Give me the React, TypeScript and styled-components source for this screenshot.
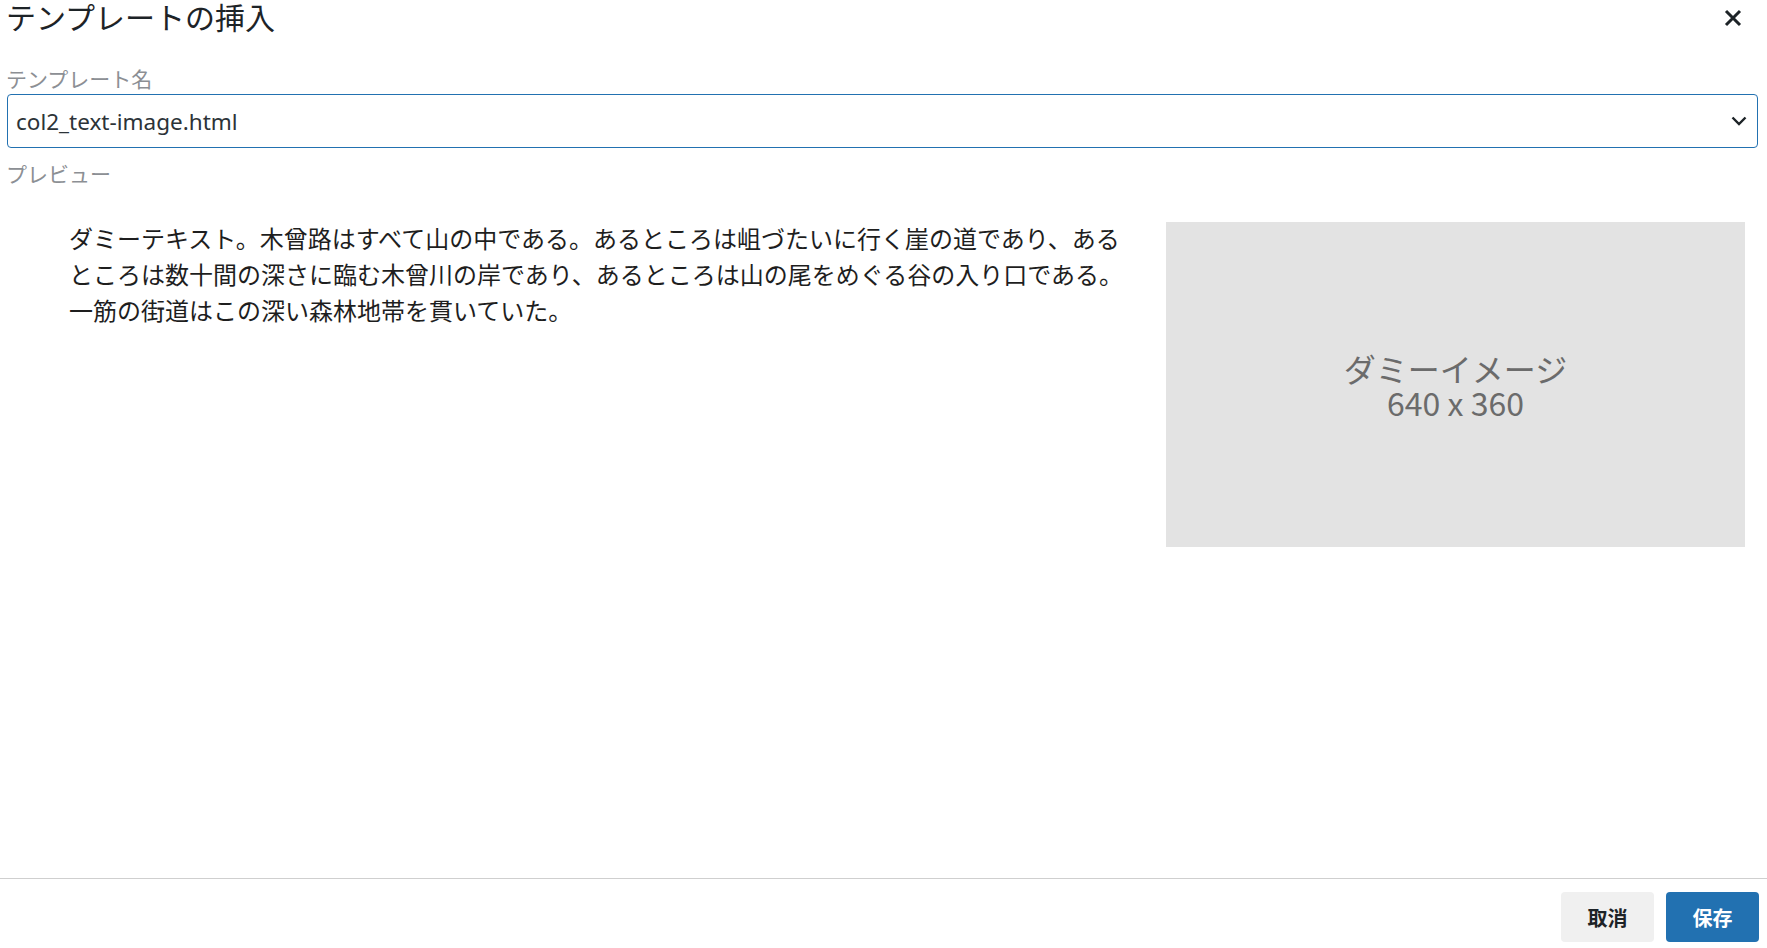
import React from "react";
import styled, { createGlobalStyle } from "styled-components";

const GlobalStyle = createGlobalStyle`
  html, body {
    margin: 0;
    padding: 0;
    height: 100%;
    background: #ffffff;
  }
  body {
    font-family: "Noto Sans", "Noto Sans CJK JP", sans-serif;
    color: #1d2327;
  }
  #root {
    height: 100%;
  }
  * {
    box-sizing: border-box;
  }
`;

const Modal = styled.div`
  display: flex;
  flex-direction: column;
  height: 100vh;
  overflow: hidden;
`;

const Body = styled.div`
  flex: 1;
  display: flex;
  flex-direction: column;
  padding: 0 9px 0 7px;
`;

const Header = styled.div`
  display: flex;
  align-items: flex-start;
  justify-content: space-between;
  height: 62px;
`;

const Title = styled.h1`
  margin: 0 0 0 -1px;
  font-family: "Noto Sans CJK JP", sans-serif;
  font-weight: 400;
  font-size: 30px;
  line-height: 32px;
  color: #1d2327;
`;

const CloseButton = styled.button`
  border: none;
  background: transparent;
  padding: 0;
  margin: 8px 15px 0 0;
  width: 20px;
  height: 20px;
  display: flex;
  align-items: center;
  justify-content: center;
  cursor: pointer;
  color: #1d2327;
`;

const FieldLabel = styled.div`
  margin-left: -1px;
  font-family: "Noto Sans CJK JP", sans-serif;
  font-size: 21px;
  line-height: 32px;
  color: #8c8f94;
`;

const SelectBox = styled.div`
  display: flex;
  align-items: center;
  justify-content: space-between;
  height: 54px;
  border: 1px solid #2271b1;
  border-radius: 4px;
  padding: 0 10px 0 8px;
  background: #fff;
`;

const SelectValue = styled.span`
  font-family: "Noto Sans", "Noto Sans CJK JP", sans-serif;
  font-size: 22.5px;
  color: #2c3338;
`;

const PreviewLabel = styled(FieldLabel)`
  margin-top: 9px;
`;

const PreviewRow = styled.div`
  display: flex;
  align-items: flex-start;
  gap: 27px;
  padding: 0 13px 0 62px;
  margin-top: 33px;
`;

const PreviewText = styled.p`
  flex: 1;
  margin: -2px 0 0 0;
  font-family: "Noto Sans CJK JP", sans-serif;
  font-size: 24px;
  line-height: 36px;
  color: #1e1e1e;
`;

const DummyImage = styled.div`
  flex: 0 0 579px;
  height: 325px;
  background: #e3e3e3;
  display: flex;
  flex-direction: column;
  align-items: center;
  justify-content: center;
  font-family: "Noto Sans CJK JP", sans-serif;
  font-size: 32px;
  line-height: 34px;
  color: #6b6b6b;
  text-align: center;
`;

const Footer = styled.div`
  display: flex;
  justify-content: flex-end;
  gap: 12px;
  border-top: 1px solid #cfcfcf;
  padding: 13px 8px 6px 0;
`;

const Button = styled.button<{ $primary?: boolean }>`
  width: 93px;
  height: 50px;
  border: none;
  border-radius: 4px;
  font-family: "Noto Sans CJK JP", sans-serif;
  font-weight: 700;
  font-size: 20px;
  cursor: pointer;
  background: ${(p) => (p.$primary ? "#2271b1" : "#f0f0f0")};
  color: ${(p) => (p.$primary ? "#ffffff" : "#1d2327")};
`;

export default function App() {
  return (
    <>
      <GlobalStyle />
      <Modal>
        <Body>
          <Header>
            <Title>テンプレートの挿入</Title>
            <CloseButton aria-label="閉じる">
              <svg width="18" height="18" viewBox="0 0 18 18">
                <path
                  d="M2 2 L16 16 M16 2 L2 16"
                  stroke="currentColor"
                  strokeWidth="3"
                  strokeLinecap="butt"
                  fill="none"
                />
              </svg>
            </CloseButton>
          </Header>
          <FieldLabel>テンプレート名</FieldLabel>
          <SelectBox>
            <SelectValue>col2_text-image.html</SelectValue>
            <svg width="16" height="10" viewBox="0 0 16 10">
              <path
                d="M1.5 1.5 L8 8 L14.5 1.5"
                stroke="#1d2327"
                strokeWidth="2.4"
                fill="none"
              />
            </svg>
          </SelectBox>
          <PreviewLabel>プレビュー</PreviewLabel>
          <PreviewRow>
            <PreviewText>
              ダミーテキスト。木曾路はすべて山の中である。あるところは岨づたいに行く崖の道であり、あるところは数十間の深さに臨む木曾川の岸であり、あるところは山の尾をめぐる谷の入り口である。一筋の街道はこの深い森林地帯を貫いていた。
            </PreviewText>
            <DummyImage>
              <span>ダミーイメージ</span>
              <span>640 x 360</span>
            </DummyImage>
          </PreviewRow>
        </Body>
        <Footer>
          <Button>取消</Button>
          <Button $primary>保存</Button>
        </Footer>
      </Modal>
    </>
  );
}
